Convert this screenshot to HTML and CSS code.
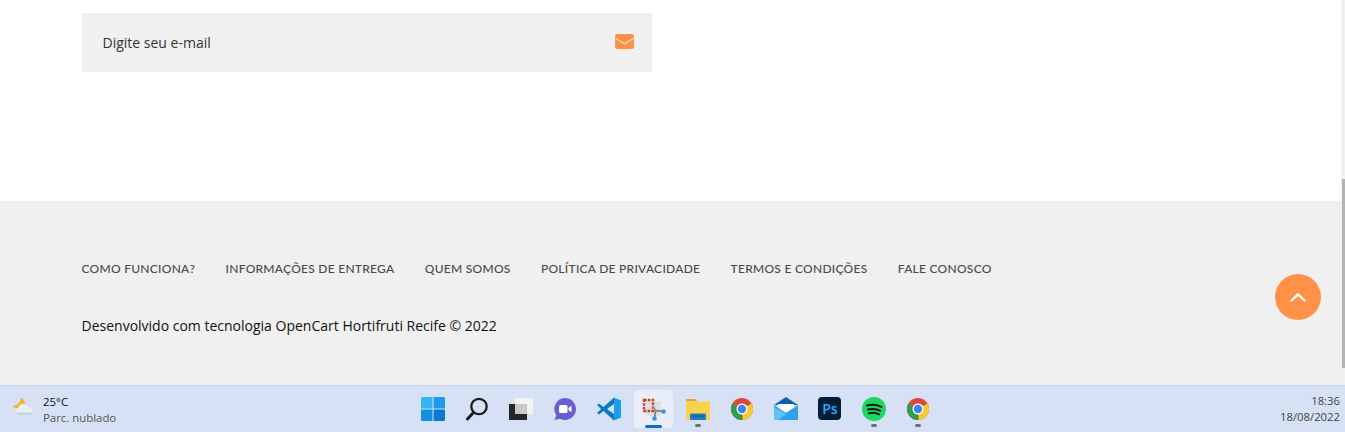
FILE: index.html
```html
<!DOCTYPE html>
<html lang="pt-BR">
<head>
<meta charset="utf-8">
<title>Hortifruti Recife</title>
<link rel="stylesheet" href="styles.css">
</head>
<body>
<div class="window">
  <main class="page">
    <section class="content">
      <form class="news">
        <span class="news-label">Digite seu e-mail</span>
        <svg class="news-icon" width="19" height="15" viewBox="0 0 19 15"><rect width="19" height="15" rx="2" fill="#ff9248"/><path d="M0.500 4.200L9.500 9.800 18.500 4.200" fill="none" stroke="#fff1e6" stroke-width="1"/></svg>
      </form>
    </section>
    <footer class="footer">
      <nav class="links">
        <a>COMO FUNCIONA?</a>
        <a>INFORMAÇÕES DE ENTREGA</a>
        <a>QUEM SOMOS</a>
        <a>POLÍTICA DE PRIVACIDADE</a>
        <a>TERMOS E CONDIÇÕES</a>
        <a>FALE CONOSCO</a>
      </nav>
      <p class="copy">Desenvolvido com tecnologia OpenCart Hortifruti Recife © 2022</p>
    </footer>
    <div class="scrollbar"><div class="thumb"></div></div>
    <a class="totop"><svg width="16" height="10" viewBox="0 0 16 10"><path d="M1.500 8.500L8 2.300l6.500 6.200" fill="none" stroke="#fff" stroke-width="2.400" stroke-linecap="round" stroke-linejoin="round"/></svg></a>
  </main>
  <div class="taskbar">
    <div class="weather">
      <svg width="24" height="24" viewBox="0 0 24 24"><path fill="#f4b324" d="M9.700.7C10 5 7 8 1.700 9 4 11.500 8 12 11 10l3-3C14 4 12 1.500 9.700.7z"/><path fill="#e6eef6" d="M8 18a3.300 3.300 0 0 1-1-6.400 5 5 0 0 1 9.500-2A4.300 4.300 0 0 1 18.500 18z"/><path fill="#bfd4e6" d="M5 15.500h17a4 4 0 0 1-3.500 2.500H8a3.500 3.500 0 0 1-3-2.500z"/></svg>
      <div class="weather-text"><span class="temp">25°C</span><span class="cond">Parc. nublado</span></div>
    </div>
    <div class="apps">
      <div class="app"><svg width="24" height="24" viewBox="0 0 24 24"><path fill="#35b4f0" d="M0 1.500A1.500 1.500 0 0 1 1.500 0h10v11.500H0z"/><path fill="#1c9be8" d="M12.500 0h10A1.500 1.500 0 0 1 24 1.500v10H12.500z"/><path fill="#1490e0" d="M0 12.500h11.500V24h-10A1.500 1.500 0 0 1 0 22.500z"/><path fill="#0a78d2" d="M12.500 12.500H24v10a1.500 1.500 0 0 1-1.500 1.500h-10z"/></svg></div>
      <div class="app"><svg width="24" height="24" viewBox="0 0 24 24"><circle cx="14" cy="9.500" r="7.700" fill="none" stroke="#1c1c1c" stroke-width="2.300"/><path d="M8.500 15.500L2.500 22" stroke="#1c1c1c" stroke-width="3" stroke-linecap="round"/></svg></div>
      <div class="app"><svg width="24" height="24" viewBox="0 0 24 24"><rect x="6" y="1" width="18" height="16" fill="#f3f3f1"/><rect x="0" y="7" width="18" height="16" fill="#262626"/><rect x="6" y="7" width="12" height="10" fill="#c9c9c6"/></svg></div>
      <div class="app"><svg width="24" height="24" viewBox="0 0 24 24"><path fill="#6a5fd0" d="M12 1a11 11 0 1 1-5.200 20.700L1.500 23l1.800-4.800A11 11 0 0 1 12 1z"/><rect x="6" y="8" width="8.500" height="8" rx="1.500" fill="#fff"/><path fill="#fff" d="M15.500 11l3-2.200v6.400l-3-2.200z"/></svg></div>
      <div class="app"><svg width="24" height="24" viewBox="0 0 24 24"><path fill="#0a7cc4" d="M17 .5L6.500 10 2 6.500 0 8l4 4-4 4 2 1.500L6.500 14 17 23.500V17l-7-5 7-5z"/><path fill="#1f9cf0" d="M17 .5l7 3v17l-7 3z"/></svg></div>
      <div class="app active"><svg width="24" height="24" viewBox="0 0 24 24"><rect x="4" y="4" width="15" height="15" fill="#dfe0e2"/><path d="M2 3h9v11H2z" fill="none" stroke="#d23a1f" stroke-width="2.400" stroke-dasharray="2.600 1.200"/><path d="M13.500 13.500L21.500 14.500M13.500 13.500L12.500 21.500M11 10l2.500 3.500" fill="none" stroke="#8a8a8a" stroke-width="2"/><circle cx="21.500" cy="14.500" r="2.300" fill="#2c9be0"/><circle cx="12.500" cy="21.500" r="2.300" fill="#2c9be0"/></svg><i class="bar"></i></div>
      <div class="app"><svg width="24" height="24" viewBox="0 0 24 24"><path fill="#e0a420" d="M0 3A1 1 0 0 1 1 2h8l2.500 2.500H0z"/><path fill="#fcd14e" d="M0 4.500h24V23H0z"/><rect x="4" y="16.500" width="16" height="6.500" rx="1" fill="#1a7fc4"/><rect x="7" y="18.500" width="10" height="1.200" fill="#0c5a96"/></svg><i class="dot"></i></div>
      <div class="app"><svg width="24" height="24" viewBox="0 0 24 24"><circle cx="12" cy="12" r="11" fill="#dc4a3c"/><path fill="#fcc934" d="M12 12l9.500-5.500A11 11 0 0 1 12.500 23z"/><path fill="#2f9e4f" d="M12 12L2.500 6.500A11 11 0 0 0 12.500 23z"/><circle cx="12" cy="12" r="5.500" fill="#fff"/><circle cx="12" cy="12" r="4.200" fill="#3f82f0"/></svg></div>
      <div class="app"><svg width="24" height="24" viewBox="0 0 24 24"><path fill="#0a62ad" d="M12 0L24 8H0z"/><path fill="#fff" d="M4 7h16v4l-8 4-8-4z"/><path fill="#29a4e8" d="M0 8l12 8 12-8v15H0z"/><path fill="#5cc3f2" d="M0 23V10l12 7-8 6z"/></svg></div>
      <div class="app"><span class="ps">Ps</span></div>
      <div class="app"><svg width="24" height="24" viewBox="0 0 24 24"><circle cx="12" cy="12" r="12" fill="#1ed760"/><path d="M5 8.500c5-1.300 10-1 14.500 1.500M6 12.500c4.200-1 8.500-.8 12.300 1.300M7 16.200c3.500-.8 7-.6 10 1.100" fill="none" stroke="#141414" stroke-width="2" stroke-linecap="round"/></svg><i class="dot"></i></div>
      <div class="app"><svg width="24" height="24" viewBox="0 0 24 24"><circle cx="12" cy="12" r="11" fill="#dc4a3c"/><path fill="#fcc934" d="M12 12l9.500-5.500A11 11 0 0 1 12.500 23z"/><path fill="#2f9e4f" d="M12 12L2.500 6.500A11 11 0 0 0 12.500 23z"/><circle cx="12" cy="12" r="5.500" fill="#fff"/><circle cx="12" cy="12" r="4.200" fill="#3f82f0"/></svg><i class="dot"></i></div>
    </div>
    <div class="clock"><span>18:36</span><span>18/08/2022</span></div>
  </div>
</div>
</body>
</html>
```
FILE: styles.css
```css
* { box-sizing: border-box; }
html, body { margin: 0; height: 100%; overflow: hidden; }
body { font-family: "Open Sans", "Liberation Sans", sans-serif; background: #fff; }
.window { width: 1345px; height: 432px; display: flex; flex-direction: column; }
.page { position: relative; height: 385px; padding-right: 4px; }
.content { height: 201px; padding: 13px 0 0 82px; background: #fff; }
.news { width: 570px; height: 59px; background: #f0f0f0; display: flex; align-items: center; justify-content: space-between; padding: 0 18px 0 20.500px; }
.news-label { font-size: 14px; color: #333; line-height: 19px; margin-top: -1px; }
.news-icon { display: block; margin-top: -2px; }
.footer { height: 184px; background: #f0f0f0; padding: 59px 0 0 81.500px; }
.links { display: flex; gap: 30.300px; height: 16px; align-items: center; }
.links a { font-family: Lato, "Liberation Sans", sans-serif; font-size: 12px; letter-spacing: .27px; font-weight: 500; color: #4a4a4a; white-space: nowrap; }
.copy { margin: 40px 0 0; font-size: 14px; line-height: 19px; color: #111; }
.scrollbar { position: absolute; top: 0; right: 0; width: 4px; height: 385px; background: #f1f1f1; }
.thumb { position: absolute; top: 179px; left: 1px; width: 3px; height: 189px; background: #b4b4b4; }
.totop { position: absolute; left: 1275px; top: 274px; width: 46px; height: 46px; border-radius: 50%; background: #ff9248; display: flex; align-items: center; justify-content: center; }
.totop svg { display: block; }
.taskbar { height: 47px; background: #d6e1f6; border-top: 1px solid #c8d3ea; position: relative; display: flex; align-items: center; justify-content: space-between; }
.weather { display: flex; align-items: center; gap: 8px; padding-left: 11px; width: 200px; }
.weather svg { display: block; }
.weather-text { display: flex; flex-direction: column; font-size: 11.400px; line-height: 16px; padding-top: 2px; }
.temp { color: #111; }
.cond { color: #555; }
.apps { display: flex; position: absolute; left: 411px; top: 4px; }
.app { width: 44.100px; height: 38px; padding-bottom: 1px; display: flex; align-items: center; justify-content: center; position: relative; }
.app svg, .ps { position: relative; }
.app.active::before { content: ""; position: absolute; top: 0; bottom: 0; left: 2.500px; right: 2.500px; background: #e9eefa; border-radius: 4px; }
.bar { position: absolute; bottom: 0; left: 13.500px; width: 17px; height: 3px; border-radius: 2px; background: #0f6cc4; }
.dot { position: absolute; bottom: 1px; left: 19px; width: 6px; height: 3px; border-radius: 2px; background: #6b7280; }
.ps { width: 23px; height: 23px; border-radius: 4px; background: #001e36; color: #31a8ff; font-weight: 600; font-size: 14px; line-height: 23px; text-align: center; }
.clock { display: flex; flex-direction: column; align-items: flex-end; font-size: 11.300px; line-height: 16px; color: #444; padding-right: 5px; }
```
